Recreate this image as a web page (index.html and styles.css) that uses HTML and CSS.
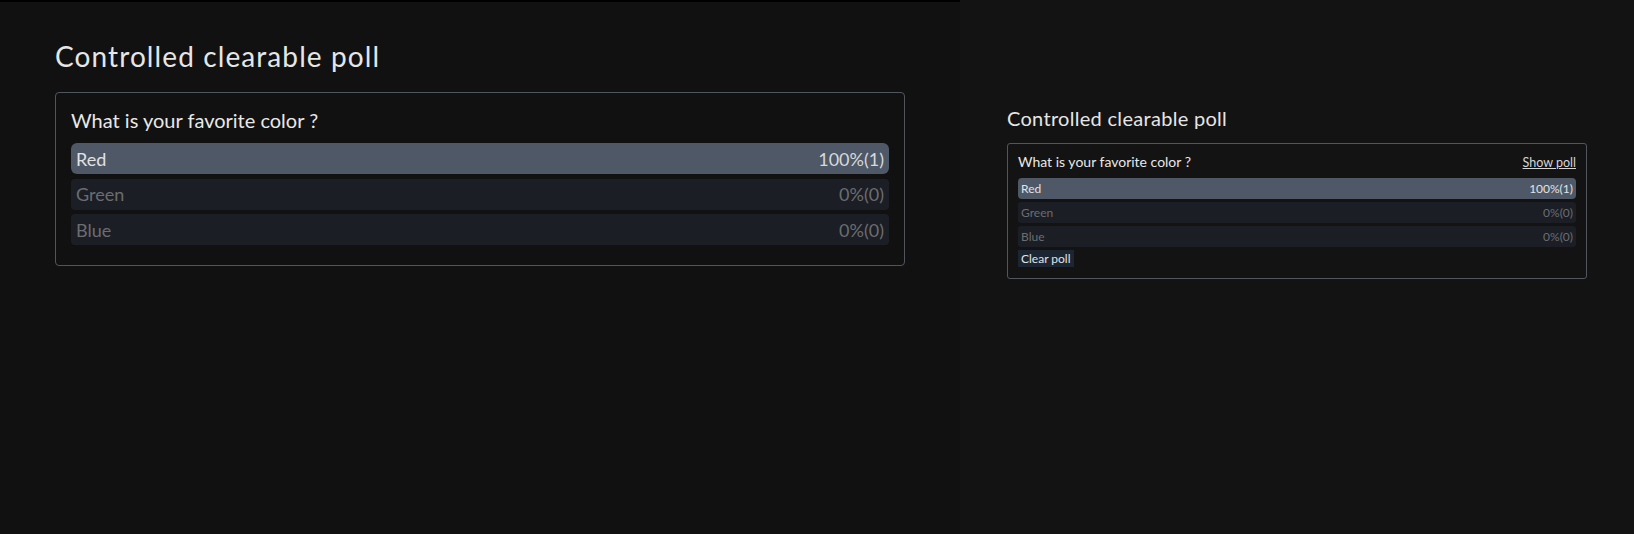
FILE: index.html
```html
<!DOCTYPE html>
<html>
<head>
<meta charset="utf-8">
<link rel="stylesheet" href="styles.css">
</head>
<body>
<div class="app">
  <main class="preview">
    <h1 class="title-lg">Controlled clearable poll</h1>
    <section class="poll-lg">
      <div class="q-lg">What is your favorite color ?</div>
      <div class="opts-lg">
        <div class="opt-lg voted"><span>Red</span><span>100%(1)</span></div>
        <div class="opt-lg"><span>Green</span><span>0%(0)</span></div>
        <div class="opt-lg"><span>Blue</span><span>0%(0)</span></div>
      </div>
    </section>
  </main>
  <aside class="side">
    <div class="side-inner">
      <h2 class="title-sm">Controlled clearable poll</h2>
      <section class="poll-sm">
        <div class="q-row">
          <span class="q-sm">What is your favorite color ?</span>
          <a class="show" href="#">Show poll</a>
        </div>
        <div class="opts-sm">
          <div class="opt-sm voted"><span>Red</span><span>100%(1)</span></div>
          <div class="opt-sm"><span>Green</span><span>0%(0)</span></div>
          <div class="opt-sm"><span>Blue</span><span>0%(0)</span></div>
        </div>
        <button class="clear">Clear poll</button>
      </section>
    </div>
  </aside>
</div>
</body>
</html>
```
FILE: styles.css
```css
* { box-sizing: border-box; }
html, body { margin: 0; padding: 0; height: 100%; }
body {
  background: #111111;
  font-family: Lato, "Noto Sans", sans-serif;
  color: #e4e4e4;
}
.app { display: flex; height: 534px; }
.preview {
  width: 960px;
  flex: none;
  background: #111111;
  border-top: 2px solid #000;
  padding: 37px 55px 0 55px;
}
.title-lg {
  margin: 0 0 19px 0;
  font-size: 28px;
  line-height: 34px;
  font-weight: 400;
  letter-spacing: 1.1px;
  color: #e6e6e6;
}
.poll-lg {
  border: 1px solid #50555e;
  border-radius: 4px;
  padding: 13px 15px 20px 15px;
}
.q-lg {
  font-size: 20px;
  line-height: 28px;
  color: #e8e8e8;
  margin-bottom: 9px;
}
.opts-lg { display: flex; flex-direction: column; gap: 4.5px; }
.opt-lg {
  height: 31px;
  display: flex;
  justify-content: space-between;
  align-items: center;
  padding: 0 5px;
  border-radius: 4px;
  background: #1b1e25;
  color: #6c6d70;
  font-size: 18px;
}
.opt-lg.voted { background: #4e5866; color: #e2e2e2; border-radius: 6px; }
.opt-lg.voted span:last-child { color: #d6d8dc; }

.side {
  flex: 1;
  background: #131313;
  display: flex;
  justify-content: center;
}
.side-inner { width: 580px; padding-top: 106px; }
.title-sm {
  margin: 0 0 13px 0;
  font-size: 20px;
  line-height: 24px;
  font-weight: 400;
  letter-spacing: 0.3px;
  color: #e6e6e6;
}
.poll-sm {
  border: 1px solid #50555e;
  border-radius: 3px;
  padding: 8px 10px 11px 10px;
}
.q-row {
  display: flex;
  justify-content: space-between;
  align-items: baseline;
  margin-bottom: 5px;
  line-height: 20px;
}
.q-sm { font-size: 14px; color: #e8e8e8; }
.show { font-size: 12.5px; color: #d6d6d6; text-decoration: underline; }
.opts-sm { display: flex; flex-direction: column; gap: 3px; }
.opt-sm {
  height: 21px;
  display: flex;
  justify-content: space-between;
  align-items: center;
  padding: 0 3px;
  border-radius: 3px;
  background: #1b1e25;
  color: #6c6d70;
  font-size: 12px;
}
.opt-sm.voted { background: #4e5866; color: #e2e2e2; border-radius: 4px; }
.clear {
  margin-top: 3px;
  display: block;
  height: 17px;
  padding: 0 3px;
  border: 0;
  border-radius: 0;
  background: #1c2632;
  color: #e2e2e2;
  font-family: inherit;
  font-size: 12px;
  line-height: 17px;
}
```
